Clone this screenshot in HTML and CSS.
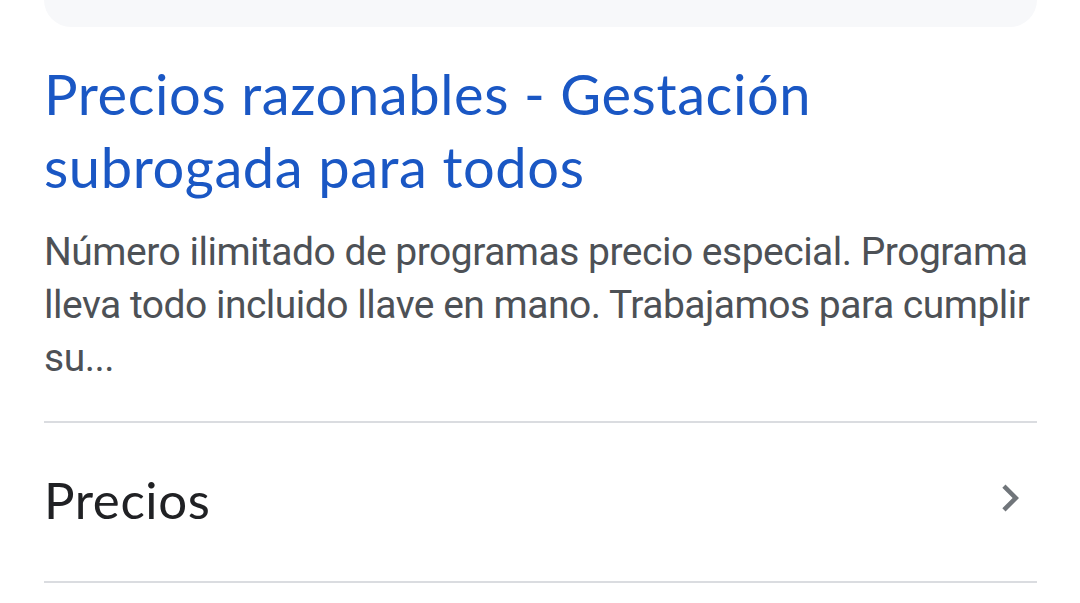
FILE: index.html
```html
<!DOCTYPE html>
<html lang="es">
<head>
<meta charset="utf-8">
<title>Precios razonables</title>
<link rel="stylesheet" href="styles.css">
</head>
<body>
<div class="page">
  <div class="prev-card"></div>
  <div class="result">
    <a class="title" href="#">Precios razonables - Gestación subrogada para todos</a>
    <p class="snippet">Número ilimitado de programas precio especial. Programa lleva todo incluido llave en mano. Trabajamos para cumplir su...</p>
  </div>
  <div class="sitelink">
    <span class="sitelink-text">Precios</span>
    <svg class="chev" viewBox="0 0 24 24" width="54" height="54"><path d="M10 6L8.59 7.41 13.17 12l-4.58 4.59L10 18l6-6z" fill="#70757a"/></svg>
  </div>
</div>
</body>
</html>
```
FILE: styles.css
```css
html, body {
  margin: 0;
  padding: 0;
  background: #ffffff;
}
.page {
  width: 1080px;
  height: 603px;
  overflow: hidden;
  padding: 0 43px 0 44px;
  box-sizing: border-box;
}
.prev-card {
  height: 27px;
  background: #f7f8fa;
  border-radius: 0 0 46px 46px;
}
.result {
  padding-top: 30px;
  border-bottom: 2px solid #dadce0;
  padding-bottom: 36px;
}
.title {
  display: block;
  font-family: Lato, "Open Sans", sans-serif;
  font-size: 56px;
  letter-spacing: 0.6px;
  line-height: 73px;
  color: #1a57c4;
  text-decoration: none;
}
.snippet {
  margin: 23px 0 0 0;
  font-family: Roboto, "Noto Sans", sans-serif;
  font-size: 39px;
  letter-spacing: -0.5px;
  line-height: 53px;
  color: #4d5156;
}
.sitelink {
  height: 158px;
  display: flex;
  align-items: center;
  justify-content: space-between;
  border-bottom: 2px solid #dadce0;
}
.sitelink-text {
  font-family: Lato, "Open Sans", sans-serif;
  font-size: 51px;
  letter-spacing: 0.6px;
  color: #202124;
  margin-bottom: 5px;
}
.chev {
  display: block;
  margin-bottom: 8px;
}
```
